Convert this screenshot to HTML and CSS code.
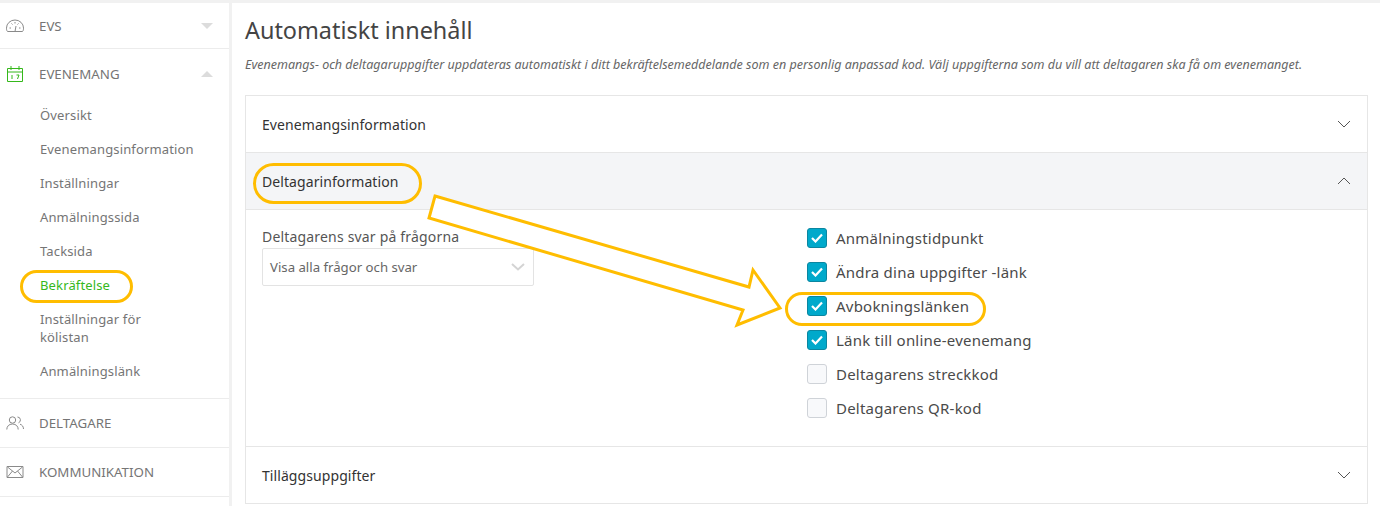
FILE: index.html
```html
<!DOCTYPE html>
<html lang="sv">
<head>
    <meta charset="UTF-8">
    <title>Automatiskt innehåll</title>
    <link rel="stylesheet" href="styles.css">
</head>
<body>
    <div class="page">
        <aside class="sidebar">
            <div class="nav-row first">
                <svg class="nav-icon" viewBox="0 0 18 14" fill="none" stroke="#8a8a8a"><path d="M1.500 12.500C.500 11.500.500 10 .500 9a8.500 8 0 0 1 17 0c0 1 0 2.500-1 3.500Z"/><path d="M9 12.500 10 7M3.500 9h1.500M13 9h1.500M5.500 4.500l1 1M12.500 4.500l-1 1M9 3v1.500"/></svg>
                <span class="nav-title">EVS</span>
                <span class="caret-down"></span>
            </div>
            <div class="nav-group">
                <div class="nav-row open">
                    <svg class="nav-icon" viewBox="0 0 18 18" fill="none" stroke="#35b81b"><path d="M1.500 3.500h15v13h-15zM1.500 7h15M5 1v4M13 1v4M6 10v4M10.500 10h2.500l-1.500 4"/></svg>
                    <span class="nav-title">EVENEMANG</span>
                    <span class="caret-up"></span>
                </div>
                <ul class="sub-nav">
                    <li>Översikt</li>
                    <li>Evenemangsinformation</li>
                    <li>Inställningar</li>
                    <li>Anmälningssida</li>
                    <li>Tacksida</li>
                    <li class="active">Bekräftelse</li>
                    <li>Inställningar för<br>kölistan</li>
                    <li>Anmälningslänk</li>
                </ul>
            </div>
            <div class="nav-row">
                <svg class="nav-icon" viewBox="0 0 18 14" fill="none" stroke="#8a8a8a"><circle cx="6.500" cy="4" r="3.200"/><path d="M.800 13.500c0-3 2-5.500 5.700-5.500s5.700 2.500 5.700 5.500M11.500 1a3 3 0 0 1 1 5.800M14 8.200c2 .6 3.500 2.300 3.500 4.800"/></svg>
                <span class="nav-title">DELTAGARE</span>
            </div>
            <div class="nav-row">
                <svg class="nav-icon" viewBox="0 0 18 14" fill="none" stroke="#8a8a8a"><path d="M1 1.500h16v11H1zM1.500 2 9 8l7.500-6M1.500 12l5-6M16.500 12l-5-6"/></svg>
                <span class="nav-title">KOMMUNIKATION</span>
            </div>
        </aside>

        <main class="content">
            <h1>Automatiskt innehåll</h1>
            <p class="intro">Evenemangs- och deltagaruppgifter uppdateras automatiskt i ditt bekräftelsemeddelande som en personlig anpassad kod. Välj uppgifterna som du vill att deltagaren ska få om evenemanget.</p>

            <div class="accordion">
                <div class="acc-head">
                    <span>Evenemangsinformation</span>
                    <svg class="chevron" viewBox="0 0 14 8" fill="none" stroke="#555"><path d="M1 1l6 6 6-6"/></svg>
                </div>
                <div class="acc-head expanded">
                    <span>Deltagarinformation</span>
                    <svg class="chevron" viewBox="0 0 14 8" fill="none" stroke="#555"><path d="M1 7l6-6 6 6"/></svg>
                </div>
                <div class="acc-body">
                    <div class="field">
                        <label>Deltagarens svar på frågorna</label>
                        <div class="select">
                            <span>Visa alla frågor och svar</span>
                            <svg class="select-arrow" viewBox="0 0 14 8" fill="none" stroke="#d4d4d4" stroke-width="2"><path d="M1 1l6 5.500L13 1"/></svg>
                        </div>
                    </div>
                    <div class="checks">
                        <div class="check"><span class="box on"><svg viewBox="0 0 12 10" fill="none" stroke="#fff" stroke-width="2.200"><path d="M1 5l3.500 3.500L11 1.500"/></svg></span>Anmälningstidpunkt</div>
                        <div class="check"><span class="box on"><svg viewBox="0 0 12 10" fill="none" stroke="#fff" stroke-width="2.200"><path d="M1 5l3.500 3.500L11 1.500"/></svg></span>Ändra dina uppgifter -länk</div>
                        <div class="check"><span class="box on"><svg viewBox="0 0 12 10" fill="none" stroke="#fff" stroke-width="2.200"><path d="M1 5l3.500 3.500L11 1.500"/></svg></span>Avbokningslänken</div>
                        <div class="check"><span class="box on"><svg viewBox="0 0 12 10" fill="none" stroke="#fff" stroke-width="2.200"><path d="M1 5l3.500 3.500L11 1.500"/></svg></span>Länk till online-evenemang</div>
                        <div class="check"><span class="box"></span>Deltagarens streckkod</div>
                        <div class="check"><span class="box"></span>Deltagarens QR-kod</div>
                    </div>
                </div>
                <div class="acc-head last">
                    <span>Tilläggsuppgifter</span>
                    <svg class="chevron" viewBox="0 0 14 8" fill="none" stroke="#555"><path d="M1 1l6 6 6-6"/></svg>
                </div>
            </div>
        </main>
    </div>

    <!-- yellow markup drawn on top of the screenshot -->
    <svg class="markup" width="1380" height="506" viewBox="0 0 1380 506" fill="none" stroke="#ffbd00" stroke-width="3">
        <rect x="21.500" y="271.500" width="110" height="30" rx="15"/>
        <rect x="254.500" y="164.500" width="166" height="38" rx="19"/>
        <rect x="786.500" y="293.500" width="198" height="31" rx="15.500"/>
        <path fill="#fff" d="M435 196 749 287 753 270 780 308 737 325 743 310 429 218Z"/>
    </svg>
</body>
</html>
```

FILE: styles.css
```css
* { margin: 0; padding: 0; box-sizing: border-box; }
body { width: 1380px; height: 506px; overflow: hidden; background: #fff; font-family: "Noto Sans", sans-serif; color: #4a4a4a; position: relative; }
.page { display: flex; height: 506px; border-top: 3px solid #f1f1f1; }

.sidebar { width: 232px; flex-shrink: 0; border-right: 3px solid #f1f1f1; }
.nav-row { display: flex; align-items: center; height: 49px; padding: 0 16px 0 6px; border-bottom: 1px solid #ececec; color: #757575; }
.nav-row.first { height: 46px; }
.nav-group { border-bottom: 1px solid #ececec; }
.nav-group .nav-row { border-bottom: none; height: 49px; }
.nav-icon { width: 18px; height: 18px; flex-shrink: 0; margin-right: 15px; }
.nav-title { flex: 1; font-size: 13.300px; }
.caret-down { border-left: 6px solid transparent; border-right: 6px solid transparent; border-top: 6px solid #dcdcdc; }
.caret-up { border-left: 6px solid transparent; border-right: 6px solid transparent; border-bottom: 6px solid #dcdcdc; }
.sub-nav { list-style: none; padding: 0 30px 10px 40px; font-size: 13px; line-height: 18px; letter-spacing: .14px; color: #757575; }
.sub-nav li { padding: 8px 0; }
.sub-nav .active { color: #35b81b; }

.content { flex: 1; padding: 0 12px 0 13px; }
h1 { font-size: 23.400px; font-weight: 400; line-height: 32px; color: #444; margin: 11px 0 0; }
.intro { font-size: 12.520px; font-style: italic; line-height: 18px; color: #666; margin: 10px 0 21px; white-space: nowrap; }

.accordion { border: 1px solid #e6e6e6; }
.acc-head { display: flex; align-items: center; justify-content: space-between; height: 57px; padding: 0 16px; font-size: 14px; letter-spacing: .08px; color: #333; border-bottom: 1px solid #e6e6e6; }
.acc-head.expanded { background: #f4f5f7; }
.acc-head.last { border-bottom: none; height: 56px; }
.chevron { width: 14px; height: 8px; }

.acc-body { display: flex; height: 237px; padding: 17px 16px 0; border-bottom: 1px solid #e6e6e6; }
.field { width: 545px; font-size: 14px; color: #555; }
.field label { display: block; line-height: 20px; letter-spacing: .18px; }
.select { display: flex; align-items: center; justify-content: space-between; width: 272px; height: 38px; margin-top: 1px; padding: 0 8px 0 7px; border: 1px solid #e3e3e3; border-radius: 2px; font-size: 13.200px; color: #666; }
.select-arrow { width: 14px; height: 8px; }

.checks { margin-top: -6px; font-size: 15px; letter-spacing: .22px; color: #4a4a4a; }
.check { display: flex; align-items: center; height: 34px; }
.box { display: flex; align-items: center; justify-content: center; width: 20px; height: 20px; margin-right: 9px; border: 1px solid #cfd3d8; border-radius: 3px; background: #f8f9fb; }
.box.on { background: #00a9cb; border-color: #0b86a0; }
.box svg { width: 12px; height: 10px; }

.markup { position: absolute; left: 0; top: 0; }
```
